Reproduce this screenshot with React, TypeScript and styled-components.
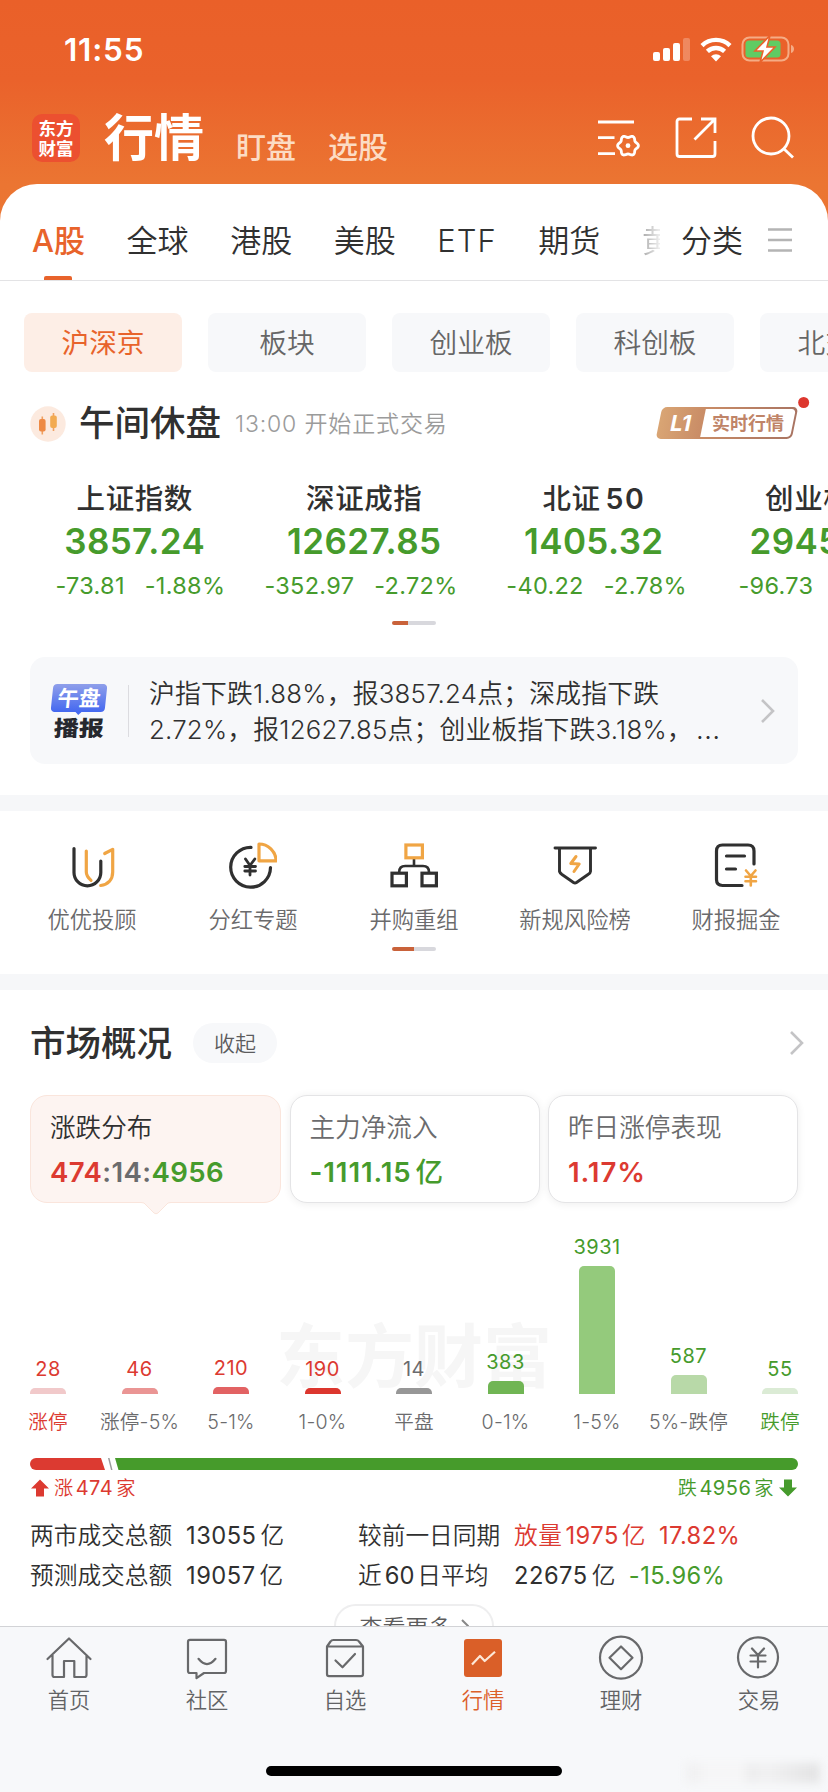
import React from "react";
import styled, { createGlobalStyle, css } from "styled-components";

const color = {
  brand: "#e8632b",
  brandDeep: "#c9623a",
  up: "#dc3a31",
  down: "#469b2c",
  ink: "#303030",
  sub: "#6b6b6d",
  mute: "#9b9b9b",
  panel: "#f7f8fa",
};

const GlobalStyle = createGlobalStyle`
  * { box-sizing: border-box; }
  body {
    margin: 0;
    background: #fff;
    color: ${color.ink};
    font-family: Inter, "Noto Sans CJK SC", sans-serif;
    font-weight: 350;
    overflow: hidden;
  }
`;

const Screen = styled.main`
  width: 828px;
  height: 1792px;
  display: flex;
  flex-direction: column;
  overflow: hidden;
  white-space: nowrap;
  background: linear-gradient(#ea6029 0, #ea622b 80px, #eb7532 184px, #eb7633 240px);
`;

/* ---------- status bar and header ---------- */

const StatusBar = styled.div`
  height: 98px;
  flex: none;
  display: flex;
  align-items: center;
  justify-content: space-between;
  padding: 0 33px 0 64px;
  color: #fff;
`;

const Clock = styled.time`
  padding-top: 1px;
  font-size: 31.5px;
  font-weight: 600;
  letter-spacing: 0.8px;
`;

const StatusIcons = styled.div`
  display: flex;
  align-items: center;
  gap: 9px;
`;

const Header = styled.header`
  height: 86px;
  flex: none;
  display: flex;
  align-items: flex-start;
  padding: 16px 33px 0 32px;
  color: #fff;
`;

const Logo = styled.div`
  width: 48px;
  height: 48px;
  border-radius: 10px;
  background: #ec5030;
  display: grid;
  grid-template-columns: 17.5px 17.5px;
  grid-auto-rows: 20px;
  place-content: center;
  font: 700 17.5px/20px "Noto Sans CJK SC", sans-serif;
  text-align: center;
`;

const HeaderTitle = styled.h1`
  margin: 0 0 0 24px;
  font-size: 50px;
  line-height: 49px;
  font-weight: 700;
`;

const HeaderLink = styled.span<{ $gap: number }>`
  margin: 16px 0 0 ${(p) => p.$gap}px;
  font-size: 30px;
  line-height: 34px;
  font-weight: 500;
  color: #fcdcc4;
`;

const HeaderIcons = styled.div`
  margin: 1px 0 0 auto;
  display: flex;
  gap: 33px;
`;

/* ---------- sheet ---------- */

const Sheet = styled.section`
  flex: 1;
  min-height: 0;
  display: flex;
  flex-direction: column;
  background: #fff;
  border-radius: 37px 37px 0 0;
  overflow: hidden;
`;

const Tabs = styled.nav`
  height: 97px;
  flex: none;
  display: flex;
  padding: 0 36px 0 32px;
  border-bottom: 1px solid #e3e3e5;
`;

const TabScroller = styled.div`
  width: 628px;
  display: flex;
  gap: 41.6px;
  overflow: hidden;
`;

const Tab = styled.span<{ $active?: boolean; $faded?: boolean; $latin?: boolean }>`
  flex: none;
  display: flex;
  flex-direction: column;
  align-items: center;
  height: 96px;
  font-size: 31px;
  line-height: 34px;
  padding-top: 40px;
  letter-spacing: ${(p) => (p.$latin ? "1px" : "0")};
  ${(p) =>
    p.$active &&
    css`
      color: ${color.brand};
      font-weight: 500;
      &::after {
        content: "";
        width: 28px;
        height: 4px;
        margin-top: auto;
        border-radius: 2px 2px 0 0;
        background: ${color.brand};
      }
    `}
  ${(p) =>
    p.$faded &&
    css`
      color: transparent;
      background: linear-gradient(90deg, #a8a8a8, #ececec 17px);
      background-clip: text;
    `}
`;

const Category = styled.span`
  margin-left: 21px;
  font-size: 31px;
  line-height: 34px;
  padding-top: 40px;
`;

const MenuLines = styled.svg`
  margin: 44px 0 0 auto;
`;

const Chips = styled.div`
  flex: none;
  display: flex;
  gap: 26px;
  margin-top: 32px;
  padding-left: 24px;
`;

const Chip = styled.span<{ $active?: boolean }>`
  flex: none;
  width: 158px;
  height: 59px;
  border-radius: 8px;
  font-size: 27.7px;
  line-height: 61px;
  text-align: center;
  color: ${(p) => (p.$active ? color.brand : "#666")};
  font-weight: ${(p) => (p.$active ? 400 : 350)};
  background: ${(p) => (p.$active ? "#fdeee6" : color.panel)};
`;

const Session = styled.div`
  flex: none;
  height: 64px;
  margin-top: 20px;
  display: flex;
  align-items: center;
  padding: 0 33px 0 30px;
`;

const SessionTitle = styled.strong`
  margin-left: 13px;
  font-size: 35.5px;
  line-height: 36px;
  font-weight: 500;
`;

const SessionNote = styled.span`
  margin: 0 auto 0 14px;
  font-size: 23px;
  line-height: 36px;
  letter-spacing: 0.85px;
  color: ${color.mute};
`;

const LevelBadge = styled.span`
  position: relative;
  width: 136px;
  height: 32px;
  display: flex;
  margin-bottom: 2px;
  border-radius: 5px;
  padding: 2px 2px 2px 0;
  transform: skewX(-11.5deg);
  background: linear-gradient(90deg, #d9a574, #c98c66 44px, #a97462);
`;

const LevelName = styled.b`
  width: 44px;
  text-align: center;
  font-size: 22px;
  line-height: 29px;
  font-weight: 700;
  color: #fff;
`;

const LevelText = styled.span`
  flex: 1;
  border-radius: 0 4px 4px 0;
  background: #fff;
  text-align: center;
  color: #c08468;
  font-size: 18px;
  line-height: 29px;
  font-weight: 700;
  span {
    display: inline-block;
    transform: skewX(11.5deg);
  }
`;

const RedDot = styled.i`
  position: absolute;
  right: -10px;
  top: -10px;
  width: 11px;
  height: 11px;
  border-radius: 50%;
  background: #dd372e;
  transform: skewX(11.5deg);
`;

const Indices = styled.div`
  flex: none;
  display: flex;
  margin-left: 20px;
  padding-top: 23px;
`;

const IndexItem = styled.div`
  flex: none;
  width: 229.5px;
  display: flex;
  flex-direction: column;
  align-items: center;
`;

const IndexName = styled.span`
  font-size: 28.5px;
  line-height: 40px;
  font-weight: 500;
  letter-spacing: 0.6px;
`;

const IndexDigits = styled.span`
  margin-left: 5px;
  font-weight: 600;
  letter-spacing: 1.4px;
`;

const IndexValue = styled.b`
  font-size: 35px;
  line-height: 45px;
  font-weight: 600;
  letter-spacing: 0.4px;
  color: ${color.down};
`;

const IndexChange = styled.span`
  align-self: stretch;
  display: grid;
  grid-template-columns: 1fr 1fr;
  gap: 20px;
  font-size: 23.5px;
  line-height: 44px;
  font-weight: 400;
  letter-spacing: 0.3px;
  color: ${color.down};
  span:first-child {
    justify-self: end;
  }
`;

const Pager = styled.div<{ $top: number; $on: number }>`
  flex: none;
  align-self: center;
  width: 44px;
  height: 4px;
  margin-top: ${(p) => p.$top}px;
  border-radius: 2px;
  background: linear-gradient(90deg, ${color.brandDeep} ${(p) => p.$on}px, #d8d8dd ${(p) => p.$on}px);
`;

const News = styled.article`
  flex: none;
  height: 107px;
  margin: 32px 30px 0;
  padding: 0 22px 0 20px;
  display: flex;
  align-items: center;
  border-radius: 15px;
  background: ${color.panel};
`;

const NewsMark = styled.div`
  width: 58px;
  height: 54px;
  display: flex;
  flex-direction: column;
  align-items: center;
`;

const NewsMarkTop = styled.span`
  position: relative;
  width: 54px;
  height: 28px;
  border-radius: 4px;
  transform: skewX(-6deg);
  background: linear-gradient(#8f9fea, #4468f0);
  color: #fff;
  font-size: 21.5px;
  line-height: 29px;
  font-weight: 700;
  text-align: center;
  &::after {
    content: "";
    position: absolute;
    left: 25px;
    bottom: -3px;
    border: 3px solid transparent;
    border-top-color: #4468f0;
    border-bottom: 0;
  }
`;

const NewsMarkBottom = styled.span`
  margin-top: 2px;
  color: #26282e;
  font-size: 25px;
  line-height: 28px;
  font-weight: 900;
  transform: skewX(-3deg) scaleY(0.86);
`;

const NewsRule = styled.i`
  width: 1px;
  height: 52px;
  margin: 0 20px 0 20px;
  background: #dcdce0;
`;

const NewsText = styled.p`
  margin: 0 auto 0 0;
  padding-top: 2px;
  font-size: 25.8px;
  line-height: 36px;
  letter-spacing: 0.22px;
`;

const Ellipsis = styled.span`
  margin-left: 3px;
  letter-spacing: 0;
  font-size: 29px;
  line-height: 1;
`;

const Strip = styled.div<{ $top: number }>`
  flex: none;
  height: 16px;
  margin-top: ${(p) => p.$top}px;
  background: #f6f7f9;
`;

const Shortcuts = styled.div`
  flex: none;
  display: grid;
  grid-template-columns: repeat(5, 161px);
  justify-content: center;
  padding-top: 30px;
`;

const Shortcut = styled.span`
  display: flex;
  flex-direction: column;
  align-items: center;
  gap: 15px;
  font-size: 22.3px;
  line-height: 32px;
  color: #6a6a6c;
`;

/* ---------- market overview ---------- */

const Overview = styled.div`
  flex: none;
  display: flex;
  align-items: center;
  height: 56px;
  margin-top: 25px;
  padding: 0 23px 0 30px;
`;

const OverviewTitle = styled.h2`
  margin: 0;
  padding-top: 1px;
  font-size: 35.5px;
  line-height: 36px;
  font-weight: 500;
`;

const Collapse = styled.span`
  width: 84px;
  height: 40px;
  margin: 0 auto 0 21px;
  border-radius: 20px;
  background: ${color.panel};
  font-size: 21px;
  line-height: 41px;
  text-align: center;
  color: #5c5c5e;
`;

const Cards = styled.div`
  flex: none;
  display: grid;
  grid-template-columns: 251px 250px 250px;
  justify-content: space-between;
  margin: 24px 30px 0;
`;

const Card = styled.div<{ $active?: boolean }>`
  position: relative;
  height: 108px;
  padding: 13px 0 0 19px;
  border-radius: 17px;
  border: 1px solid ${(p) => (p.$active ? "#fae5dc" : "#e4e4e6")};
  background: ${(p) => (p.$active ? "#fdf4f1" : "#fff")};
  box-shadow: ${(p) => (p.$active ? "none" : "0 1px 9px rgba(0,0,0,.07)")};
`;

const CardPointer = styled.svg`
  position: absolute;
  left: 110px;
  top: 105px;
`;

const CardLabel = styled.div<{ $active?: boolean }>`
  font-size: 25.6px;
  line-height: 38px;
  color: ${(p) => (p.$active ? color.ink : color.sub)};
`;

const CardValue = styled.div<{ $tone?: string; $spacing?: number }>`
  margin-top: 6px;
  font-size: 27.6px;
  line-height: 38px;
  font-weight: 600;
  letter-spacing: ${(p) => p.$spacing ?? 0.4}px;
  color: ${(p) => p.$tone ?? color.sub};
`;

const CardUnit = styled.span`
  margin-left: 4px;
  font-weight: 500;
`;

const Tone = styled.span<{ $tone: string }>`
  color: ${(p) => p.$tone};
`;

const Chart = styled.div`
  position: relative;
  flex: none;
  height: 191px;
  display: flex;
  align-items: flex-end;
  padding-left: 2.25px;
`;

const Watermark = styled.span`
  position: absolute;
  left: 276px;
  top: 107px;
  font: 700 69px/84px "Noto Sans CJK SC", sans-serif;
  color: #f6f6f6;
`;

const BarColumn = styled.div<{ $tone: string }>`
  position: relative;
  width: 91.5px;
  display: flex;
  flex-direction: column;
  align-items: center;
  font-size: 20px;
  line-height: 26px;
  font-weight: 400;
  letter-spacing: 0.5px;
  color: ${(p) => p.$tone};
`;

const Bar = styled.i<{ $fill: string }>`
  width: 36px;
  margin-top: 6px;
  border-radius: 5px 5px 0 0;
  background: ${(p) => p.$fill};
`;

const AxisLabels = styled.div`
  flex: none;
  display: flex;
  padding: 15px 0 0 2.25px;
`;

const AxisLabel = styled.span<{ $tone?: string }>`
  width: 91.5px;
  text-align: center;
  font-size: 19.6px;
  line-height: 26px;
  letter-spacing: 0.2px;
  color: ${(p) => p.$tone ?? color.sub};
`;

const Balance = styled.div`
  flex: none;
  height: 12px;
  margin: 23px 30px 0;
  display: flex;
  border-radius: 6px;
  overflow: hidden;
`;

const BalanceUp = styled.i`
  width: 78px;
  background: ${color.up};
  clip-path: polygon(0 0, 71px 0, 75px 100%, 0 100%);
`;

const BalanceFlat = styled.i`
  width: 6px;
  background: #9a9a9a;
  clip-path: polygon(0 0, 1.5px 0, 4.5px 100%, 3px 100%);
`;

const BalanceDown = styled.i`
  flex: 1;
  background: #469b2b;
  clip-path: polygon(1px 0, 100% 0, 100% 100%, 4.5px 100%);
`;

const BalanceLabels = styled.div`
  flex: none;
  display: flex;
  justify-content: space-between;
  margin: 5px 31px 0;
`;

const BalanceLabel = styled.span<{ $tone: string }>`
  display: flex;
  align-items: center;
  gap: 5px;
  font-size: 19.2px;
  line-height: 26px;
  letter-spacing: 0.5px;
  color: ${(p) => p.$tone};
`;

const Num = styled.span`
  margin: 0 3px;
  font-weight: 400;
`;

const CompanyCount = styled.span`
  margin: 0 3px 0 2px;
  font-size: 20px;
  font-weight: 400;
`;

const Totals = styled.dl`
  flex: none;
  display: grid;
  grid-template-columns: 156px 172px 156px 1fr;
  grid-auto-rows: 40px;
  margin: 15px 30px 0;
  font-size: 23.7px;
  line-height: 40px;
`;

const Term = styled.dt``;

const Amount = styled.dd<{ $tone?: string }>`
  margin: 0;
  letter-spacing: 0.5px;
  color: ${(p) => p.$tone ?? color.ink};
`;

const Figure = styled.span`
  margin-right: 4px;
  font-weight: 400;
`;

const Rate = styled.span<{ $tone: string }>`
  margin-left: 13px;
  font-weight: 400;
  letter-spacing: 0.4px;
  color: ${(p) => p.$tone};
`;

const More = styled.button`
  flex: none;
  align-self: center;
  width: 160px;
  height: 44px;
  margin-top: 8px;
  display: flex;
  align-items: center;
  justify-content: center;
  gap: 9px;
  border: 2px solid #eeeeef;
  border-radius: 22px;
  background: #fff;
  font: 350 23px "Noto Sans CJK SC", sans-serif;
  color: #5c5c5c;
`;

/* ---------- bottom navigation ---------- */

const BottomBar = styled.footer`
  flex: none;
  position: relative;
  height: 166px;
  background: ${color.panel};
  border-top: 1px solid #d2d3d6;
  display: flex;
  flex-direction: column;
  align-items: center;
`;

const BottomNav = styled.nav`
  width: 828px;
  display: grid;
  grid-template-columns: repeat(6, 138px);
  padding-top: 6px;
`;

const NavItem = styled.span<{ $active?: boolean }>`
  display: flex;
  flex-direction: column;
  align-items: center;
  gap: 3px;
  font-size: 21.3px;
  line-height: 32px;
  color: ${(p) => (p.$active ? "#dc6029" : "#626365")};
`;

const HomeIndicator = styled.i`
  width: 296px;
  height: 10px;
  margin-top: 50px;
  border-radius: 5px;
  background: #000;
`;

const Smudge = styled.i`
  position: absolute;
  left: 686px;
  top: 136px;
  width: 134px;
  height: 20px;
  filter: blur(4px);
  background: linear-gradient(90deg, #f1f1f2 0 10px, #f6f6f7 20px 55px, #ededee 64px, #f1f1f2 80px, #e4e4e5 130px);
`;

/* ---------- icons ---------- */

type IconProps = { children: React.ReactNode; size?: number; stroke?: string; width?: number };

const Icon = ({ children, size = 48, stroke = "#303030", width = 3.2 }: IconProps) => (
  <svg
    width={size}
    height={size}
    viewBox={`0 0 ${size} ${size}`}
    fill="none"
    stroke={stroke}
    strokeWidth={width}
    strokeLinecap="round"
    strokeLinejoin="round"
  >
    {children}
  </svg>
);

const gearPath =
  Array.from({ length: 72 }, (_, i) => {
    const a = (i * Math.PI) / 36;
    const r = 9.3 + 1.1 * Math.cos(6 * a);
    return `${i ? "L" : "M"}${(31 + r * Math.cos(a)).toFixed(2)} ${(30.7 + r * Math.sin(a)).toFixed(2)}`;
  }).join("") + "Z";

const amber = "#f0a544";

const Chevron = () => (
  <svg width="16" height="26" viewBox="0 0 16 26" fill="none" stroke="#c4c4c6" strokeWidth="2.6">
    <path d="M2 2l11 11L2 24" />
  </svg>
);

const SignalIcon = () => (
  <svg width="38" height="25" viewBox="0 0 38 25" fill="#fff">
    <rect x="0" y="15" width="7" height="9" rx="2" />
    <rect x="10" y="11" width="7" height="13" rx="2" />
    <rect x="20" y="6" width="7" height="18" rx="2" />
    <rect x="30" y="1" width="7" height="23" rx="2" opacity=".25" />
  </svg>
);

const WifiIcon = () => (
  <svg width="32" height="25" viewBox="0 0 32 25" fill="none" stroke="#fff" strokeWidth="4.4">
    <path d="M2 8.6a20 20 0 0 1 28 0" />
    <path d="M7.4 14.4a12.4 12.4 0 0 1 17.2 0" />
    <path d="M11 19.2a7.4 7.4 0 0 1 10 0L16 24.4z" fill="#fff" stroke="none" />
  </svg>
);

const BatteryIcon = () => (
  <svg width="54" height="28" viewBox="0 0 54 28">
    <rect x="1.5" y="2.5" width="46" height="23" rx="7" fill="none" stroke="#f5ac85" strokeWidth="2" />
    <path d="M50 10c4 1 4 7 0 8z" fill="#f5ac85" />
    <rect x="4.5" y="5.5" width="35" height="17" rx="3.5" fill="#60cc63" />
    <path d="M29 .5L14 16h8l-3 11.500L34 12h-8z" fill="#fff" stroke="#ea622b" strokeWidth="1.6" />
  </svg>
);

const shortcuts = [
  {
    label: "优优投顾",
    art: (
      <>
        <path d="M6 7.500V31.500a13.400 13.400 0 0 0 26.800 0V20" />
        <path stroke={amber} d="M18.300 10V31c0 4 2 6 4.700 8.400M36.700 12.500L44.700 8.300V31c0 8-5 12.500-12 13.500" />
      </>
    ),
  },
  {
    label: "分红专题",
    art: (
      <>
        <path d="M22 6.400A19.900 19.900 0 1 0 41.500 26.500" />
        <path strokeWidth="2.800" d="M16.500 18L21 24.500L25.800 18M21 24.500V34M15.800 25.500H26.500M15.800 30H26.500" />
        <path stroke={amber} d="M30 3C39 3 47 10.500 47 19.800H30Z" />
      </>
    ),
  },
  {
    label: "并购重组",
    art: (
      <>
        <g strokeLinejoin="miter">
          <rect x="2" y="32.200" width="14.400" height="12.600" />
          <rect x="32" y="32.200" width="14.400" height="12.600" />
          <path strokeLinecap="butt" strokeWidth="2.600" d="M9.200 31c0-4 2-6 6-6H33c4 0 6 2 6 6M24 18v7" />
          <rect stroke={amber} x="15.900" y="4" width="16.500" height="12.800" />
        </g>
      </>
    ),
  },
  {
    label: "新规风险榜",
    art: (
      <>
        <path d="M4 7H44.500M8.500 7V30.500Q9 32 11 33.500L22.500 41.500Q24 42.500 25.500 41.500L37 33.500Q39.500 32 39.500 30.500V7" strokeWidth="2.900" />
        <path stroke={amber} strokeWidth="3" d="M25 15.500L19.800 22.500L28.200 23L23 30.500" />
      </>
    ),
  },
  {
    label: "财报掘金",
    art: (
      <>
        <path d="M42 23V10q0-6-6-6H10.500q-6 0-6 6V38.500q0 6 6 6H30M14.500 15H32.500M14.500 28H23.500" />
        <path stroke={amber} strokeWidth="2.600" d="M34 29.500L38.800 35L43.500 29.500M38.800 35V44.500M33.500 35.800H44M33.500 40.300H44" />
      </>
    ),
  },
];

const navItems = [
  { label: "首页", art: <path d="M2.500 26L24 5.500L45.500 26M7.500 22V42Q7.500 44 9.500 44H19V28H29.300V44H39.500Q41.500 44 41.500 42V22" /> },
  { label: "社区", art: <path d="M7 6.900H41Q43 6.900 43 9V38Q43 40 41 40H21L13.500 45.200V40H7Q5 40 5 38V9Q5 6.900 7 6.900ZM15.500 25.800q8.500 10.500 17 0" /> },
  { label: "自选", art: <path d="M6 13.500L9.500 8.500Q10.500 7 12.500 7H35Q37 7 38 8.500L42 13.500M6 13.500H42V41Q42 43.200 40 43.200H8Q6 43.200 6 41ZM14.500 27.500L21.500 34.300L34 21" /> },
  {
    label: "行情",
    active: true,
    art: (
      <>
        <rect x="5" y="6" width="38" height="38" rx="3" fill="#da5f28" stroke="none" />
        <path stroke="#fde8d8" strokeLinecap="butt" d="M13 31.500L21 23L25.700 28L36 18.700" />
      </>
    ),
  },
  {
    label: "理财",
    art: (
      <>
        <circle cx="24" cy="24.700" r="21" />
        <path d="M24 13.500L35.500 24.800L24 36.200L12.500 24.800Z" />
      </>
    ),
  },
  {
    label: "交易",
    art: (
      <>
        <circle cx="23" cy="24.300" r="20" />
        <path d="M17 15.500L23 22L29 15.500M23 22V34.500M15.500 22.500H30.500M15.500 28.500H30.500" />
      </>
    ),
  },
];

/* ---------- data ---------- */

const indices = [
  { name: "上证指数", value: "3857.24", change: "-73.81", rate: "-1.88%" },
  { name: "深证成指", value: "12627.85", change: "-352.97", rate: "-2.72%" },
  { name: "北证", digits: "50", value: "1405.32", change: "-40.22", rate: "-2.78%" },
  { name: "创业板指", value: "2945.84", change: "-96.73", rate: "-3.18%" },
];

const bars = [
  { label: "涨停", count: 28, h: 6, fill: "#f1c9ca", tone: color.up, labelTone: color.up },
  { label: "涨停-5%", count: 46, h: 6, fill: "#ea9594", tone: color.up },
  { label: "5-1%", count: 210, h: 7, fill: "#e26263", tone: color.up },
  { label: "1-0%", count: 190, h: 6, fill: "#dc362e", tone: color.up },
  { label: "平盘", count: 14, h: 6, fill: "#979797", tone: color.sub },
  { label: "0-1%", count: 383, h: 13, fill: "#70b554", tone: color.down },
  { label: "1-5%", count: 3931, h: 128, fill: "#94ca7c", tone: color.down },
  { label: "5%-跌停", count: 587, h: 19, fill: "#b8d9a8", tone: color.down },
  { label: "跌停", count: 55, h: 6, fill: "#dbebd5", tone: color.down, labelTone: color.down },
];

export default function App() {
  return (
    <Screen>
      <GlobalStyle />
      <StatusBar>
        <Clock>11:55</Clock>
        <StatusIcons>
          <SignalIcon />
          <WifiIcon />
          <BatteryIcon />
        </StatusIcons>
      </StatusBar>
      <Header>
        <Logo>
          <span>东</span>
          <span>方</span>
          <span>财</span>
          <span>富</span>
        </Logo>
        <HeaderTitle>行情</HeaderTitle>
        <HeaderLink $gap={32}>盯盘</HeaderLink>
        <HeaderLink $gap={32}>选股</HeaderLink>
        <HeaderIcons>
          <Icon size={44} stroke="#fff" width={2.8}>
            <g strokeLinecap="butt">
              <path d="M1 7H37M1 22.700H17.500M1 38.700H18" />
              <path d={gearPath} />
            </g>
            <circle cx="31" cy="30.700" r="2.400" fill="#fff" stroke="none" />
          </Icon>
          <Icon size={44} stroke="#fff" width={2.8}>
            <g strokeLinecap="butt" strokeLinejoin="miter">
              <path d="M18 4H5.500Q3 4 3 6.500V39Q3 41.500 5.500 41.500H38.500Q41 41.500 41 39V26" />
              <path d="M27 4H41V18M20.500 24.500L40.500 4.500" />
            </g>
          </Icon>
          <Icon size={44} stroke="#fff" width={2.8}>
            <circle cx="20" cy="21" r="18" />
            <path strokeLinecap="butt" d="M32.500 33.500L42 42.500" />
          </Icon>
        </HeaderIcons>
      </Header>

      <Sheet>
        <Tabs>
          <TabScroller>
            <Tab $active>A股</Tab>
            <Tab>全球</Tab>
            <Tab>港股</Tab>
            <Tab>美股</Tab>
            <Tab $latin>ETF</Tab>
            <Tab>期货</Tab>
            <Tab $faded>黄金</Tab>
          </TabScroller>
          <Category>分类</Category>
          <MenuLines width="24" height="24" stroke="#b4b4b4" strokeWidth="2.600">
            <path d="M0 1.500H24M0 12H24M0 22.500H24" />
          </MenuLines>
        </Tabs>

        <Chips>
          <Chip $active>沪深京</Chip>
          <Chip>板块</Chip>
          <Chip>创业板</Chip>
          <Chip>科创板</Chip>
          <Chip>北交所</Chip>
        </Chips>

        <Session>
          <svg width="36" height="36" viewBox="0 0 36 36">
            <circle cx="18" cy="18" r="17.700" fill="#fceadf" />
            <path d="M12.300 10.500v18M23.500 7v18" stroke="#f0a060" strokeWidth="1.600" />
            <rect x="9" y="13" width="6.600" height="12.500" rx="2" fill="#ee8a44" />
            <rect x="20.200" y="9.500" width="6.600" height="12.500" rx="2" fill="#f2aa50" />
          </svg>
          <SessionTitle>午间休盘</SessionTitle>
          <SessionNote>13:00 开始正式交易</SessionNote>
          <LevelBadge>
            <LevelName>L1</LevelName>
            <LevelText>
              <span>实时行情</span>
            </LevelText>
            <RedDot />
          </LevelBadge>
        </Session>

        <Indices>
          {indices.map((it) => (
            <IndexItem key={it.name}>
              <IndexName>
                {it.name}
                {it.digits && <IndexDigits>{it.digits}</IndexDigits>}
              </IndexName>
              <IndexValue>{it.value}</IndexValue>
              <IndexChange>
                <span>{it.change}</span>
                <span>{it.rate}</span>
              </IndexChange>
            </IndexItem>
          ))}
        </Indices>
        <Pager $top={13} $on={16} />

        <News>
          <NewsMark>
            <NewsMarkTop>午盘</NewsMarkTop>
            <NewsMarkBottom>播报</NewsMarkBottom>
          </NewsMark>
          <NewsRule />
          <NewsText>
            沪指下跌1.88%，报3857.24点；深成指下跌
            <br />
            2.72%，报12627.85点；创业板指下跌3.18%，<Ellipsis>…</Ellipsis>
          </NewsText>
          <Chevron />
        </News>

        <Strip $top={31} />
        <Shortcuts>
          {shortcuts.map((s) => (
            <Shortcut key={s.label}>
              <Icon>{s.art}</Icon>
              {s.label}
            </Shortcut>
          ))}
        </Shortcuts>
        <Pager $top={11} $on={22} />
        <Strip $top={23} />

        <Overview>
          <OverviewTitle>市场概况</OverviewTitle>
          <Collapse>收起</Collapse>
          <Chevron />
        </Overview>

        <Cards>
          <Card $active>
            <CardLabel $active>涨跌分布</CardLabel>
            <CardValue>
              <Tone $tone={color.up}>474</Tone>:14:<Tone $tone={color.down}>4956</Tone>
            </CardValue>
            <CardPointer width="30" height="15" viewBox="0 0 30 15">
              <path d="M0 1.500L3 2L13 12Q15 13.500 17 12L27 2L30 1.500V0H0Z" fill="#fdf4f1" />
              <path d="M0 1.500L3 2L13 12Q15 13.500 17 12L27 2L30 1.500" fill="none" stroke="#fae5dc" />
            </CardPointer>
          </Card>
          <Card>
            <CardLabel>主力净流入</CardLabel>
            <CardValue $tone={color.down} $spacing={0.9}>
              -1111.15<CardUnit>亿</CardUnit>
            </CardValue>
          </Card>
          <Card>
            <CardLabel>昨日涨停表现</CardLabel>
            <CardValue $tone={color.up} $spacing={0.9}>1.17%</CardValue>
          </Card>
        </Cards>

        <Chart>
          <Watermark>东方财富</Watermark>
          {bars.map((b) => (
            <BarColumn key={b.label} $tone={b.tone}>
              {b.count}
              <Bar $fill={b.fill} style={{ height: b.h }} />
            </BarColumn>
          ))}
        </Chart>
        <AxisLabels>
          {bars.map((b) => (
            <AxisLabel key={b.label} $tone={b.labelTone}>
              {b.label}
            </AxisLabel>
          ))}
        </AxisLabels>
        <Balance>
          <BalanceUp />
          <BalanceFlat />
          <BalanceDown />
        </Balance>
        <BalanceLabels>
          <BalanceLabel $tone={color.up}>
            <svg width="18" height="18" fill={color.up}>
              <path d="M9 0.500L18 9.500H13V17.500H5V9.500H0Z" />
            </svg>
            <span>
              涨<CompanyCount>474</CompanyCount>家
            </span>
          </BalanceLabel>
          <BalanceLabel $tone={color.down}>
            <span>
              跌<CompanyCount>4956</CompanyCount>家
            </span>
            <svg width="18" height="18" fill={color.down}>
              <path d="M9 17.500L18 8.500H13V0.500H5V8.500H0Z" />
            </svg>
          </BalanceLabel>
        </BalanceLabels>

        <Totals>
          <Term>两市成交总额</Term>
          <Amount>
            <Figure>13055</Figure>亿
          </Amount>
          <Term>较前一日同期</Term>
          <Amount $tone={color.up}>
            放量<Num>1975</Num>亿<Rate $tone={color.up}>17.82%</Rate>
          </Amount>
          <Term>预测成交总额</Term>
          <Amount>
            <Figure>19057</Figure>亿
          </Amount>
          <Term>
            近<Num>60</Num>日平均
          </Term>
          <Amount>
            <Figure>22675</Figure>亿<Rate $tone={color.down}>-15.96%</Rate>
          </Amount>
        </Totals>
        <More>
          查看更多
          <svg width="8" height="14" fill="none" stroke="#888" strokeWidth="2">
            <path d="M1 1l6 6-6 6" />
          </svg>
        </More>
      </Sheet>

      <BottomBar>
        <BottomNav>
          {navItems.map((n) => (
            <NavItem key={n.label} $active={n.active}>
              <Icon stroke="#68696b" width={2.2}>
                {n.art}
              </Icon>
              {n.label}
            </NavItem>
          ))}
        </BottomNav>
        <HomeIndicator />
        <Smudge />
      </BottomBar>
    </Screen>
  );
}
